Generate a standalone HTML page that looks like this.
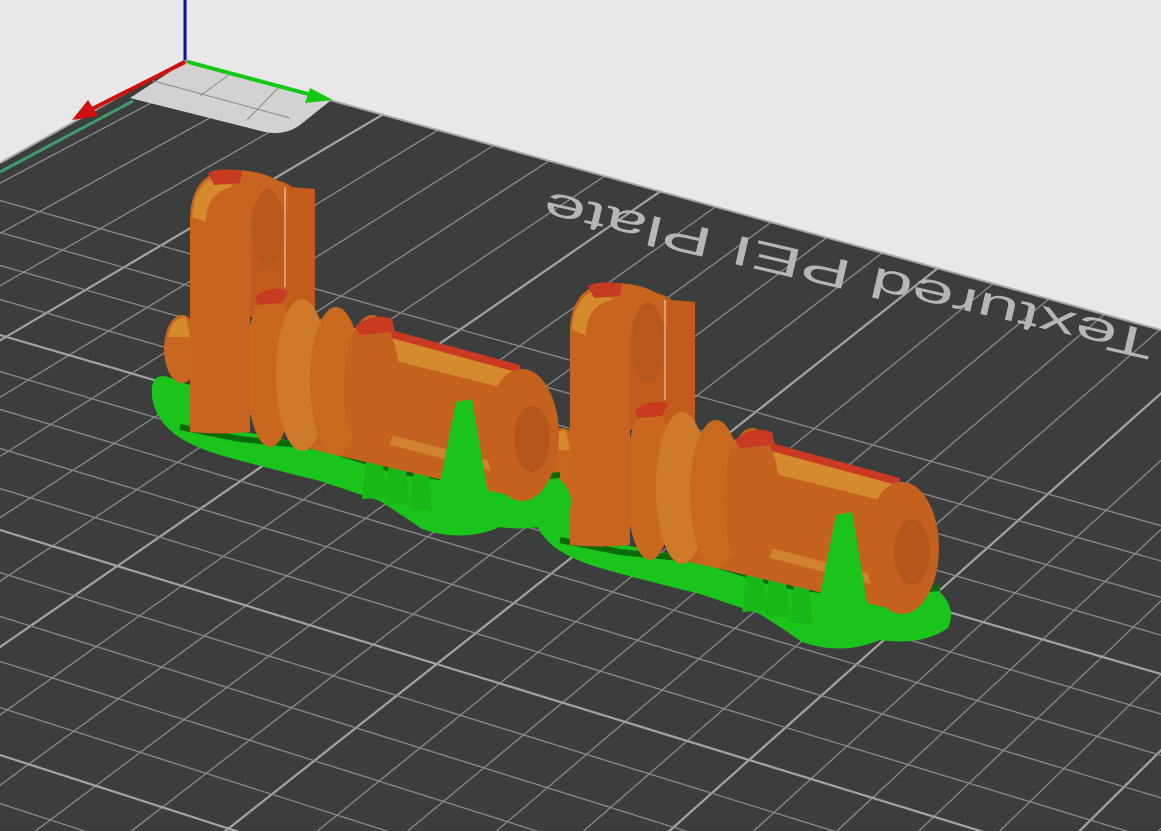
<!DOCTYPE html>
<html><head><meta charset="utf-8"><style>
html,body{margin:0;padding:0;background:#e8e8e8;overflow:hidden;width:1161px;height:831px;}
svg{display:block}
</style></head><body>
<svg id="s" width="1161" height="831" viewBox="0 0 1161 831" xmlns="http://www.w3.org/2000/svg">
<defs>
<clipPath id="plate"><polygon points="185,60 1161,330 1161,831 0,831 0,163"/></clipPath>
</defs>
<rect width="1161" height="831" fill="#e8e8e8"/>
<polygon points="185,60 1161,330 1161,831 0,831 0,163" fill="#3c3d3d"/>
<g id="grid" clip-path="url(#plate)"></g>
<line x1="185" y1="60" x2="1161" y2="330" stroke="#a8a8a8" stroke-width="2"/>
<line x1="185" y1="60" x2="0" y2="163" stroke="#a8a8a8" stroke-width="2"/>
<path d="M185,62 L330,101 L300,125 Q285,136 265,132 L130,98 Z" fill="#d2d2d2"/>
<line x1="150" y1="80" x2="290" y2="118" stroke="#8a8a8a" stroke-width="1"/>
<line x1="230" y1="74" x2="200" y2="96" stroke="#8a8a8a" stroke-width="1"/>
<line x1="280" y1="86" x2="247" y2="120" stroke="#8a8a8a" stroke-width="1"/>
<line x1="133" y1="101" x2="0" y2="172" stroke="#3f9a6c" stroke-width="3"/>
<text transform="translate(1156,332) rotate(193) scale(1,0.8)" font-family="Liberation Sans, sans-serif" font-size="52" fill="#b6b6b6" textLength="625" lengthAdjust="spacingAndGlyphs">Textured PEI Plate</text>
<line x1="185" y1="0" x2="185" y2="60" stroke="#0a0ab8" stroke-width="3"/>
<line x1="185" y1="62" x2="90" y2="110" stroke="#d01010" stroke-width="4"/>
<polygon points="72,120 88,100 98,116" fill="#d01010"/>
<line x1="188" y1="62" x2="312" y2="95" stroke="#14c814" stroke-width="4"/>
<polygon points="333,100 310,88 305,103" fill="#14c814"/>

<g id="obj2">
 <path d="M532,500 Q534,486 548,490 L575,500 L600,540 L700,560 L800,588 L860,598 L935,588 Q958,606 948,628 Q922,646 880,640 Q842,656 802,642 Q782,628 760,614 L700,594 Q650,582 600,568 Q560,556 545,538 Q530,520 532,500 Z" fill="#1ac41a"/>
 <path d="M560,540 L620,552 L700,560 L780,585 L860,595 L940,588" stroke="#0b6a0b" stroke-width="6" fill="none"/>
 <path d="M748,560 L760,560 L768,610 L742,612 Z" fill="#17b817"/>
 <path d="M770,565 L784,566 L790,618 L765,616 Z" fill="#17b817"/>
 <path d="M795,570 L808,572 L812,624 L790,622 Z" fill="#17b817"/>
 <ellipse cx="562" cy="462" rx="18" ry="34" fill="#c8651f"/>
 <path d="M548,450 Q552,430 566,430 L570,450 Z" fill="#d68a2c"/>
 <path d="M630,292 Q660,290 672,300 L695,302 L695,430 L630,430 Z" fill="#c25c1c"/>
 <path d="M690,430 L905,483 L905,612 L690,562 Z" fill="#c6621f"/>
 <path d="M700,432 L900,485 L900,505 L700,455 Z" fill="#d58a2d"/>
 <path d="M760,440 L900,478 L900,486 L760,448 Z" fill="#c83a22"/>
 <path d="M700,530 L895,580 L895,590 L700,540 Z" fill="#d08230"/>
 <ellipse cx="650" cy="482" rx="24" ry="78" fill="#c9671f"/>
 <ellipse cx="682" cy="488" rx="26" ry="76" fill="#cf7a2a"/>
 <ellipse cx="716" cy="494" rx="26" ry="74" fill="#c9681f"/>
 <ellipse cx="752" cy="500" rx="28" ry="72" fill="#c5621f"/>
 <path d="M735,440 Q752,425 772,432 L775,445 L740,448 Z" fill="#c83a22"/>
 <path d="M635,410 Q650,398 668,404 L662,416 L638,418 Z" fill="#c83a22"/>
 <ellipse cx="902" cy="548" rx="37" ry="66" fill="#c5611e"/>
 <ellipse cx="912" cy="552" rx="18" ry="33" fill="#b5561a"/>
 <path d="M836,515 L852,512 L872,632 L812,636 Z" fill="#1ac41a"/>
 <path d="M570,545 L570,330 Q572,284 612,283 Q650,283 668,302 L668,330 Q655,300 640,310 Q630,318 630,340 L630,545 Q600,548 570,545 Z" fill="#c8641f"/>
 <path d="M572,330 Q574,292 606,286 L612,300 Q586,306 586,335 Z" fill="#d58a2c"/>
 <path d="M588,286 Q600,280 622,284 L620,296 L594,298 Z" fill="#c83a22"/>
 <ellipse cx="648" cy="342" rx="16" ry="40" fill="#b9581b"/>
 <line x1="665" y1="300" x2="665" y2="400" stroke="#f2d8c0" stroke-width="1"/>
</g>
<use href="#obj2" transform="translate(-380,-113)"/>
</svg>
<script>
(function(){
 var g=document.getElementById('grid'),out='';
 function seg(x1,y1,x2,y2,bold){out+='<line x1="'+x1.toFixed(1)+'" y1="'+y1.toFixed(1)+'" x2="'+x2.toFixed(1)+'" y2="'+y2.toFixed(1)+'" stroke="'+(bold?'#a4a4a4':'#8a8a8a')+'" stroke-width="'+(bold?2.2:1.3)+'"/>';}
 for(var k=-6;k<=22;k++){
  var xk=327+55.5*k, yk=60+0.277*(xk-185), s=0.57+0.02*k;
  var y2=1000, x2=xk-(y2-yk)/s;
  seg(xk,yk,x2,y2,((k-1)%5+5)%5==0);
 }
 for(var j=1;j<=24;j++){
  var y0=170+30*j+0.6*j*j, sl=0.277+0.003*j;
  seg(-400,y0-400*sl,1600,y0+1600*sl,j%5==0);
 }
 g.innerHTML=out;
})();
</script>
</body></html>
